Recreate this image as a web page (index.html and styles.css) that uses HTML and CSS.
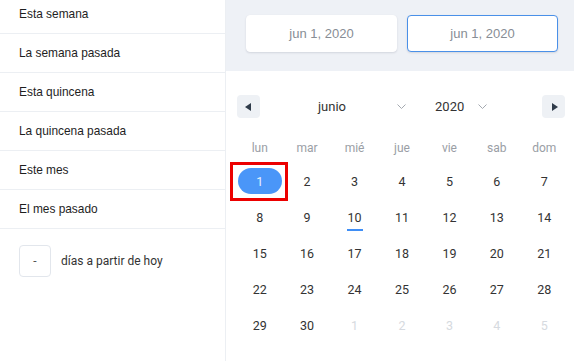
FILE: index.html
```html
<!DOCTYPE html>
<html lang="es">
<head>
<meta charset="utf-8">
<link rel="stylesheet" href="styles.css">
</head>
<body>
<div class="app">
  <aside class="presets">
    <ul class="preset-list">
      <li class="preset">Esta semana</li>
      <li class="preset">La semana pasada</li>
      <li class="preset">Esta quincena</li>
      <li class="preset">La quincena pasada</li>
      <li class="preset">Este mes</li>
      <li class="preset">El mes pasado</li>
    </ul>
    <div class="days-from">
      <div class="days-input">-</div>
      <span class="days-label">días a partir de hoy</span>
    </div>
  </aside>
  <main class="picker">
    <div class="range">
      <div class="date-input">jun 1, 2020</div>
      <div class="date-input active">jun 1, 2020</div>
    </div>
    <div class="calendar">
      <div class="nav">
        <button class="nav-btn"><span class="tri tri-left"></span></button>
        <div class="select month"><span>junio</span><svg class="chev" width="9" height="5" viewBox="0 0 9 5"><path d="M0.5 0.5 L4.5 4.5 L8.5 0.5" fill="none" stroke="#a4a9b0" stroke-width="1"/></svg></div>
        <div class="select year"><span>2020</span><svg class="chev" width="9" height="5" viewBox="0 0 9 5"><path d="M0.5 0.5 L4.5 4.5 L8.5 0.5" fill="none" stroke="#a4a9b0" stroke-width="1"/></svg></div>
        <button class="nav-btn"><span class="tri tri-right"></span></button>
      </div>
      <div class="weekdays">
        <span>lun</span><span>mar</span><span>mié</span><span>jue</span><span>vie</span><span>sab</span><span>dom</span>
      </div>
      <div class="days">
        <span class="day"><span class="sel">1</span><span class="mark"></span></span>
        <span class="day">2</span><span class="day">3</span><span class="day">4</span><span class="day">5</span><span class="day">6</span><span class="day">7</span>
        <span class="day">8</span><span class="day">9</span><span class="day"><span class="today">10</span></span><span class="day">11</span><span class="day">12</span><span class="day">13</span><span class="day">14</span>
        <span class="day">15</span><span class="day">16</span><span class="day">17</span><span class="day">18</span><span class="day">19</span><span class="day">20</span><span class="day">21</span>
        <span class="day">22</span><span class="day">23</span><span class="day">24</span><span class="day">25</span><span class="day">26</span><span class="day">27</span><span class="day">28</span>
        <span class="day">29</span><span class="day">30</span><span class="day out">1</span><span class="day out">2</span><span class="day out">3</span><span class="day out">4</span><span class="day out">5</span>
      </div>
    </div>
  </main>
</div>
</body>
</html>
```

FILE: styles.css
```css
* { box-sizing: border-box; }
html, body { margin: 0; padding: 0; background: #fff; }
body { width: 574px; height: 361px; overflow: hidden; font-family: Roboto, "Liberation Sans", sans-serif; }

.app { display: flex; height: 361px; }

.presets {
  width: 226px;
  flex: none;
  border-right: 1px solid #eceff3;
  overflow: hidden;
}
.preset-list { list-style: none; margin: -5px 0 0 0; padding: 0; }
.preset {
  height: 39px;
  line-height: 38px;
  padding-left: 19px;
  border-bottom: 1px solid #eceff3;
  font-family: "Liberation Sans", Arial, sans-serif;
  font-size: 11.9px;
  color: #1e1e1e;
}
.days-from {
  display: flex;
  align-items: center;
  gap: 10px;
  padding: 16px 0 0 19px;
}
.days-input {
  width: 32px;
  height: 32px;
  border: 1px solid #e2e6ec;
  border-radius: 4px;
  display: flex;
  align-items: center;
  justify-content: center;
  font-size: 12px;
  color: #555;
}
.days-label { font-size: 12px; color: #333; }

.picker { flex: 1; display: flex; flex-direction: column; }
.range {
  height: 71px;
  background: #eef1f6;
  display: flex;
  gap: 10px;
  padding: 15px 16px 0 20px;
}
.date-input {
  width: 151px;
  height: 37px;
  background: #fff;
  border: 1px solid #fff;
  border-radius: 4px;
  box-shadow: 0 1px 2px rgba(60, 70, 90, 0.15);
  display: flex;
  align-items: center;
  justify-content: center;
  font-family: "Liberation Sans", Arial, sans-serif;
  font-size: 13px;
  color: #878d95;
}
.date-input.active { border-color: #4a90e8; }

.calendar { padding: 24px 6px 0 10px; }
.nav { display: flex; align-items: center; height: 23px; padding: 0 3px 0 1px; }
.nav-btn {
  width: 23px;
  height: 23px;
  border: 0;
  padding: 0;
  background: #eef1f5;
  border-radius: 4px;
  display: flex;
  align-items: center;
  justify-content: center;
  flex: none;
}
.tri { width: 0; height: 0; border-top: 4px solid transparent; border-bottom: 4px solid transparent; }
.tri-left { border-right: 6px solid #2f3b4a; margin-right: 1px; }
.tri-right { border-left: 6px solid #2f3b4a; margin-left: 2px; }
.select { display: flex; align-items: center; font-size: 13px; color: #333; }
.select .chev { display: block; }
.month { margin-left: 58px; }
.month .chev { margin-left: 51px; }
.year { margin-left: 29px; }
.year .chev { margin-left: 14px; }
.nav .nav-btn:last-child { margin-left: auto; }

.weekdays {
  display: grid;
  grid-template-columns: repeat(7, 1fr);
  height: 24px;
  margin-top: 18px;
  align-items: center;
  text-align: center;
  font-size: 12px;
  color: #9a9ea5;
}
.days {
  display: grid;
  grid-template-columns: repeat(7, 1fr);
  grid-auto-rows: 36px;
  margin-top: 3px;
}
.day {
  position: relative;
  display: flex;
  align-items: center;
  justify-content: center;
  font-size: 12.5px;
  color: #333;
}
.day.out { color: #d6dae0; }
.sel {
  width: 44px;
  height: 26px;
  border-radius: 13px;
  background: #4a96f8;
  color: #e6f0ff;
  display: flex;
  align-items: center;
  justify-content: center;
}
.mark {
  position: absolute;
  left: -6px;
  top: -1px;
  width: 58px;
  height: 39px;
  border: 3px solid #ec0000;
}
.today {
  display: inline-block;
  position: relative;
}
.today::after {
  content: "";
  position: absolute;
  left: -1px;
  right: -1px;
  bottom: -6px;
  height: 2px;
  background: #3f8ef5;
}
```
